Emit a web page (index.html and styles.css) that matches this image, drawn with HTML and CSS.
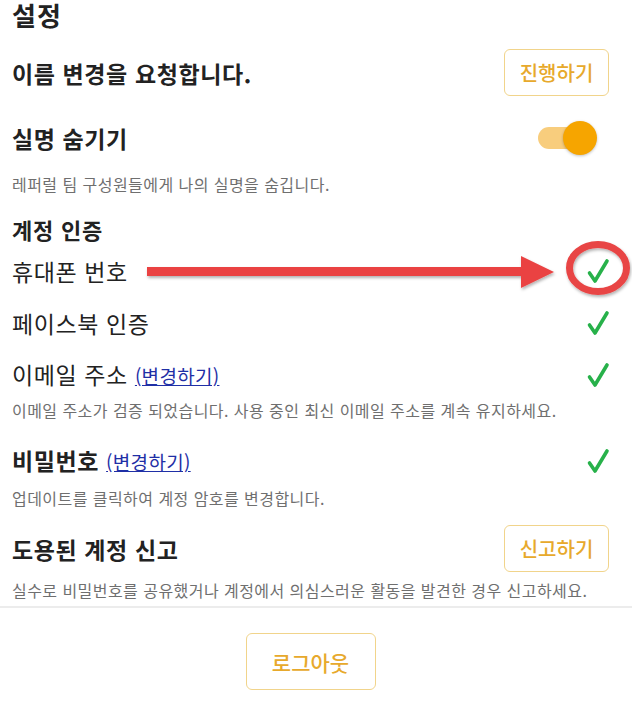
FILE: index.html
```html
<!DOCTYPE html>
<html lang="ko">
<head>
    <meta charset="UTF-8">
    <meta name="viewport" content="width=device-width, initial-scale=1.0">
    <title>설정</title>
    <link rel="stylesheet" href="styles.css">
</head>
<body>
    <div class="page">
        <h1 class="title">설정</h1>

        <div class="row row-name">
            <span class="label bold">이름 변경을 요청합니다.</span>
            <button class="btn">진행하기</button>
        </div>

        <div class="row row-hide">
            <span class="label bold">실명 숨기기</span>
            <span class="toggle"><span class="knob"></span></span>
        </div>
        <p class="desc">레퍼럴 팀 구성원들에게 나의 실명을 숨깁니다.</p>

        <h2 class="section">계정 인증</h2>

        <div class="row row-check row-phone">
            <span class="label">휴대폰 번호</span>
            <svg class="check" viewBox="0 0 24 26"><path d="M3.5 15 L9 23 L21 3"/></svg>
        </div>
        <div class="row row-check">
            <span class="label">페이스북 인증</span>
            <svg class="check" viewBox="0 0 24 26"><path d="M3.5 15 L9 23 L21 3"/></svg>
        </div>
        <div class="row row-check">
            <span class="label">이메일 주소 <a href="#" class="change">(변경하기)</a></span>
            <svg class="check" viewBox="0 0 24 26"><path d="M3.5 15 L9 23 L21 3"/></svg>
        </div>
        <p class="desc">이메일 주소가 검증 되었습니다. 사용 중인 최신 이메일 주소를 계속 유지하세요.</p>

        <div class="row row-check row-pass">
            <span class="label bold">비밀번호 <a href="#" class="change">(변경하기)</a></span>
            <svg class="check" viewBox="0 0 24 26"><path d="M3.5 15 L9 23 L21 3"/></svg>
        </div>
        <p class="desc">업데이트를 클릭하여 계정 암호를 변경합니다.</p>

        <div class="row row-report">
            <span class="label bold">도용된 계정 신고</span>
            <button class="btn">신고하기</button>
        </div>
        <p class="desc desc-last">실수로 비밀번호를 공유했거나 계정에서 의심스러운 활동을 발견한 경우 신고하세요.</p>

        <div class="footer">
            <button class="btn btn-logout">로그아웃</button>
        </div>

        <!-- annotation drawn over the screenshot -->
        <svg class="annotation" width="644" height="713" viewBox="0 0 644 713">
            <defs>
                <filter id="shadow" x="-10%" y="-50%" width="120%" height="200%">
                    <feDropShadow dx="1" dy="2" stdDeviation="1.5" flood-color="#000" flood-opacity="0.3"/>
                </filter>
            </defs>
            <g filter="url(#shadow)" fill="#ea4343">
                <rect x="147" y="267" width="378" height="9"/>
                <polygon points="521,256 554,272 521,288"/>
            </g>
            <ellipse cx="598" cy="268" rx="28.5" ry="23.5" fill="none" stroke="#e84545" stroke-width="7" filter="url(#shadow)"/>
        </svg>
    </div>
</body>
</html>
```

FILE: styles.css
```css
body {
    margin: 0;
    background: #fff;
    font-family: "Noto Sans CJK KR", "Noto Sans", sans-serif;
    color: #222;
}
.page {
    position: relative;
    width: 632px;
    height: 713px;
    overflow: hidden;
}
.title {
    margin: 0 0 0 12px;
    font-size: 26px;
    font-weight: 700;
    letter-spacing: 1px;
    line-height: 30px;
}
.row {
    display: flex;
    align-items: center;
    justify-content: space-between;
    padding: 0 22px 0 12px;
}
.label {
    font-size: 23px;
    line-height: 30px;
    font-weight: 400;
    letter-spacing: 0.6px;
}
.bold {
    font-weight: 700;
}
.row-name {
    margin-top: 19px;
    padding-right: 23px;
}
.row-hide {
    margin-top: 27px;
    padding-right: 42px;
}
.btn {
    width: 105px;
    height: 47px;
    border: 1px solid #f1d48b;
    border-radius: 6px;
    background: #fff;
    color: #e7a92c;
    font-family: inherit;
    font-size: 20px;
    font-weight: 500;
    cursor: pointer;
}
.toggle {
    position: relative;
    width: 52px;
    height: 22px;
    border-radius: 11px;
    background: #f8cd7d;
}
.knob {
    position: absolute;
    right: -7px;
    top: -6px;
    width: 34px;
    height: 34px;
    border-radius: 50%;
    background: #f6a500;
    box-shadow: 0 1px 3px rgba(0, 0, 0, 0.25);
}
.desc {
    margin: 0;
    padding: 0 12px;
    font-size: 16px;
    letter-spacing: 0.45px;
    line-height: 22px;
    color: #6f6f6f;
}
.row-hide + .desc {
    margin-top: 20px;
}
.section {
    margin: 19px 0 0 12px;
    font-size: 22px;
    font-weight: 700;
    letter-spacing: 0.8px;
    line-height: 30px;
}
.row-check {
    height: 52px;
}
.row-phone {
    margin-top: 1px;
}
.row-check + .desc {
    margin-top: -2px;
}
.row-pass {
    margin-top: 14px;
}
.row-pass + .desc {
    margin-top: 0;
}
.check {
    width: 24px;
    height: 26px;
    fill: none;
    stroke: #27b14a;
    stroke-width: 3.6;
    stroke-linecap: round;
    stroke-linejoin: round;
}
.change {
    font-size: 19px;
    font-weight: 400;
    letter-spacing: 0.3px;
    color: #1f2fa6;
    text-decoration: underline;
}
.row-report {
    margin-top: 16px;
    padding-right: 23px;
}
.desc-last {
    margin-top: 7px;
    padding-bottom: 5px;
    border-bottom: 2px solid #ececec;
}
.footer {
    display: flex;
    justify-content: center;
    padding-top: 25px;
    padding-right: 11px;
}
.btn-logout {
    width: 130px;
    height: 57px;
    font-size: 21px;
}
.annotation {
    position: absolute;
    left: 0;
    top: 0;
    pointer-events: none;
}
```
